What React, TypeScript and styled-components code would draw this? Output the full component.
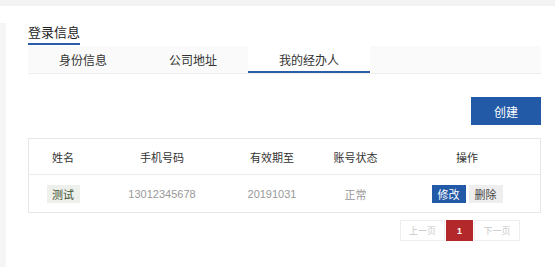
import styled, { createGlobalStyle } from "styled-components";

const Global = createGlobalStyle`
  body {
    margin: 0;
    background: #fff;
    font-family: "Liberation Sans", "Noto Sans CJK SC", sans-serif;
  }
`

const tabs = ["身份信息", "公司地址", "我的经办人"]
const cols = "68px 130px 90px 77px 1fr"

const rows = [
  { name: "测试", phone: "13012345678", until: "20191031", status: "正常" },
]

const App = () => {
  return (
    <Page>
      <Global />
      <TopStrip />
      <Main>
        <Side />
        <Content>
          <TitleRow>
            <Title>登录信息</Title>
          </TitleRow>
          <TabBar>
            {tabs.map((t, i) => (
              <Tab key={t} active={i === 2}>{t}</Tab>
            ))}
          </TabBar>
          <Toolbar>
            <CreateBtn>创建</CreateBtn>
          </Toolbar>
          <Table>
            <HeadRow>
              <Cell>姓名</Cell>
              <Cell>手机号码</Cell>
              <Cell>有效期至</Cell>
              <Cell>账号状态</Cell>
              <Cell>操作</Cell>
            </HeadRow>
            {rows.map((r) => (
              <BodyRow key={r.phone}>
                <Cell><NameTag>{r.name}</NameTag></Cell>
                <Cell>{r.phone}</Cell>
                <Cell>{r.until}</Cell>
                <Cell>{r.status}</Cell>
                <Cell>
                  <Actions>
                    <ActionBtn primary>修改</ActionBtn>
                    <ActionBtn>删除</ActionBtn>
                  </Actions>
                </Cell>
              </BodyRow>
            ))}
          </Table>
          <Pager>
            <PageBtn w={45}>上一页</PageBtn>
            <PageBtn w={27} current>1</PageBtn>
            <PageBtn w={46}>下一页</PageBtn>
          </Pager>
        </Content>
      </Main>
    </Page>
  )
}

export default App;

const Page = styled.div`
  width: 555px;
  height: 267px;
  overflow: hidden;
`
const TopStrip = styled.div`
  height: 6px;
  background: #f3f3f3;
`
const Main = styled.div`
  display: flex;
  height: 261px;
`
const Side = styled.div`
  width: 6px;
  margin-top: 17px;
  background: #f5f5f5;
`
const Content = styled.div`
  flex: 1;
  padding: 0 14px 0 22px;
  display: flex;
  flex-direction: column;
`
const TitleRow = styled.div`
  display: flex;
  padding-top: 19px;
`
const Title = styled.div`
  font-size: 13px;
  line-height: 16px;
  color: #222;
  padding-bottom: 2px;
  border-bottom: 2px solid #2a5ca8;
`
const TabBar = styled.div`
  margin-top: 1px;
  display: flex;
  height: 27px;
  background: #fafafa;
  border-bottom: 1px solid #eeeeee;
`
const Tab = styled.div<{ active?: boolean }>`
  box-sizing: border-box;
  height: 27px;
  padding: 2px 31px 0;
  display: flex;
  align-items: center;
  font-size: 12px;
  color: #333;
  background: ${(p) => (p.active ? "#fff" : "transparent")};
  border-bottom: 2px solid ${(p) => (p.active ? "#2a5ca8" : "transparent")};
`
const Toolbar = styled.div`
  display: flex;
  justify-content: flex-end;
  margin-top: 23px;
`
const CreateBtn = styled.div`
  width: 70px;
  height: 28px;
  background: #225aa7;
  color: #fff;
  font-size: 12px;
  display: flex;
  align-items: center;
  justify-content: center;
`
const Table = styled.div`
  margin-top: 13px;
  border: 1px solid #e6e6e6;
`
const HeadRow = styled.div`
  display: grid;
  grid-template-columns: ${cols};
  height: 35px;
  border-bottom: 1px solid #ececec;
  color: #333;
  font-size: 11px;
`
const BodyRow = styled.div`
  display: grid;
  grid-template-columns: ${cols};
  height: 37px;
  color: #999;
  font-size: 11px;
`
const Cell = styled.div`
  display: flex;
  align-items: center;
  justify-content: center;
`
const NameTag = styled.span`
  width: 33px;
  height: 18px;
  background: #eef0ec;
  color: #3d5230;
  display: flex;
  align-items: center;
  justify-content: center;
  font-size: 11px;
`
const Actions = styled.div`
  display: flex;
  gap: 3px;
`
const ActionBtn = styled.span<{ primary?: boolean }>`
  width: 34px;
  height: 18px;
  display: flex;
  align-items: center;
  justify-content: center;
  font-size: 11px;
  background: ${(p) => (p.primary ? "#225aa7" : "#eeeeee")};
  color: ${(p) => (p.primary ? "#fff" : "#444")};
`
const Pager = styled.div`
  display: flex;
  justify-content: flex-end;
  gap: 1px;
  margin-top: 7px;
  padding-right: 21px;
`
const PageBtn = styled.div<{ current?: boolean; w: number }>`
  box-sizing: border-box;
  width: ${(p) => p.w}px;
  height: 21px;
  display: flex;
  align-items: center;
  justify-content: center;
  font-size: 9px;
  font-weight: ${(p) => (p.current ? "bold" : "normal")};
  color: ${(p) => (p.current ? "#fff" : "#c8c8c8")};
  background: ${(p) => (p.current ? "#b3282a" : "#fff")};
  border: 1px solid ${(p) => (p.current ? "#b3282a" : "#eeeeee")};
`
